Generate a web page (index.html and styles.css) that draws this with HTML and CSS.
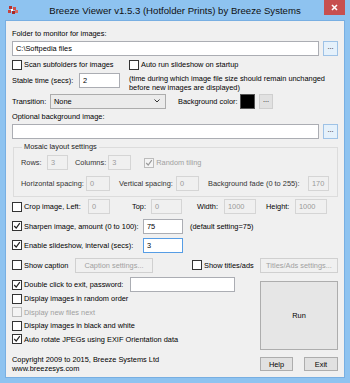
FILE: index.html
```html
<!DOCTYPE html>
<html>
<head>
<meta charset="utf-8">
<title>Breeze Viewer</title>
<link rel="stylesheet" href="styles.css">
</head>
<body>
<div class="window">
  <div class="titlebar">
    <div class="tb-left">
      <svg class="appicon" width="10" height="9" viewBox="0 0 10 9">
        <rect x="1" y="0" width="3" height="3" fill="#b8322f"/>
        <rect x="5" y="1" width="3" height="3" fill="#d0504a"/>
        <rect x="0" y="4" width="3" height="3" fill="#c64540"/>
        <rect x="4" y="5" width="3" height="3" fill="#a82a28"/>
        <rect x="7" y="4" width="3" height="3" fill="#d86a60"/>
        <rect x="3" y="3" width="2" height="2" fill="#fff"/>
      </svg>
    </div>
    <div class="title">Breeze Viewer v1.5.3 (Hotfolder Prints) by Breeze Systems</div>
    <div class="tb-right">
      <div class="close">
        <svg width="7" height="7" viewBox="0 0 7 7"><path d="M1 1L6 6M6 1L1 6" stroke="#fff" stroke-width="1.6"/></svg>
      </div>
    </div>
  </div>

  <div class="client">
    <div class="row text-row r1">Folder to monitor for images:</div>
    <div class="row r2">
      <div class="field w-path">C:\Softpedia files</div>
      <div class="btn dots">...</div>
    </div>
    <div class="row r3">
      <div class="cbl w-scan"><span class="cb"></span>Scan subfolders for images</div>
      <div class="cbl"><span class="cb"></span>Auto run slideshow on startup</div>
    </div>
    <div class="row r4">
      <div class="lbl w-stable">Stable time (secs):</div>
      <div class="field w-stablein">2</div>
      <div class="note">(time during which image file size should remain unchanged<br>before new images are displayed)</div>
    </div>
    <div class="row r5">
      <div class="lbl w-trans">Transition:</div>
      <div class="select">None<svg class="chev" width="6" height="4" viewBox="0 0 6 4"><path d="M0.5 0.5L3 3L5.5 0.5" fill="none" stroke="#333" stroke-width="1"/></svg></div>
      <div class="lbl w-bgcol">Background color:</div>
      <div class="swatch"></div>
      <div class="btn dots small">...</div>
    </div>
    <div class="row text-row r6">Optional background image:</div>
    <div class="row r7">
      <div class="field w-path"></div>
      <div class="btn dots">...</div>
    </div>

    <fieldset class="group">
      <legend>Mosaic layout settings</legend>
      <div class="row ga">
        <div class="lbl glbl w-rows">Rows:</div>
        <div class="field dis w-rowsin">3</div>
        <div class="lbl glbl w-cols">Columns:</div>
        <div class="field dis w-colsin">3</div>
        <div class="cbl dtext w-rand"><span class="cb dis"><svg viewBox="0 0 10 10" width="8" height="8"><path d="M1.5 5L4 7.5L8.5 1.5" fill="none" stroke="#9a9a9a" stroke-width="1.5"/></svg></span>Random tiling</div>
      </div>
      <div class="row gb">
        <div class="lbl glbl w-hsp">Horizontal spacing:</div>
        <div class="field dis w-hspin">0</div>
        <div class="lbl glbl w-vsp">Vertical spacing:</div>
        <div class="field dis w-vspin">0</div>
        <div class="lbl glbl w-fade">Background fade (0 to 255):</div>
        <div class="field dis w-fadein">170</div>
      </div>
    </fieldset>

    <div class="row r9">
      <div class="cbl w-crop"><span class="cb"></span>Crop image, Left:</div>
      <div class="field dis w-left">0</div>
      <div class="lbl w-top">Top:</div>
      <div class="field dis w-topin">0</div>
      <div class="lbl w-width">Width:</div>
      <div class="field dis w-widthin">1000</div>
      <div class="lbl w-height">Height:</div>
      <div class="field dis w-heightin">1000</div>
    </div>
    <div class="row r10">
      <div class="cbl w-sharp"><span class="cb"><svg viewBox="0 0 10 10" width="8" height="8"><path d="M1.5 5L4 7.5L8.5 1.5" fill="none" stroke="#222" stroke-width="1.5"/></svg></span>Sharpen image, amount (0 to 100):</div>
      <div class="field w-amount">75</div>
      <div class="lbl after">(default setting=75)</div>
    </div>
    <div class="row r11">
      <div class="cbl w-sharp"><span class="cb"><svg viewBox="0 0 10 10" width="8" height="8"><path d="M1.5 5L4 7.5L8.5 1.5" fill="none" stroke="#222" stroke-width="1.5"/></svg></span>Enable slideshow, interval (secs):</div>
      <div class="field focus w-amount">3</div>
    </div>
    <div class="row r12">
      <div class="cbl w-cap"><span class="cb"></span>Show caption</div>
      <div class="btn dis w-capbtn">Caption settings...</div>
      <div class="cbl w-titles"><span class="cb"></span>Show titles/ads</div>
      <div class="btn dis w-capbtn">Titles/Ads settings...</div>
    </div>

    <div class="lower">
      <div class="lower-left">
        <div class="row r-dbl">
          <div class="cbl w-dbl"><span class="cb"><svg viewBox="0 0 10 10" width="8" height="8"><path d="M1.5 5L4 7.5L8.5 1.5" fill="none" stroke="#222" stroke-width="1.5"/></svg></span>Double click to exit, password:</div>
          <div class="field w-pass"></div>
        </div>
        <div class="row r-opt"><div class="cbl"><span class="cb"></span>Display images in random order</div></div>
        <div class="row r-opt"><div class="cbl dtext"><span class="cb dis"></span>Display new files next</div></div>
        <div class="row r-opt"><div class="cbl"><span class="cb"></span>Display images in black and white</div></div>
        <div class="row r-opt"><div class="cbl"><span class="cb"><svg viewBox="0 0 10 10" width="8" height="8"><path d="M1.5 5L4 7.5L8.5 1.5" fill="none" stroke="#222" stroke-width="1.5"/></svg></span>Auto rotate JPEGs using EXIF Orientation data</div></div>
        <div class="copyright">Copyright 2009 to 2015, Breeze Systems Ltd<br>www.breezesys.com</div>
      </div>
      <div class="lower-right">
        <div class="btn run">Run</div>
        <div class="btnrow">
          <div class="btn w-help">Help</div>
          <div class="btn w-exit">Exit</div>
        </div>
      </div>
    </div>
  </div>
</div>
</body>
</html>
```

FILE: styles.css
```css
html, body {
  margin: 0;
  padding: 0;
}
body {
  font-family: "Liberation Sans", Arial, sans-serif;
  font-size: 7.4px;
  color: #000;
  background: #8ec3f0;
}
.window {
  width: 350px;
  height: 383px;
  background: #8ec3f0;
  display: flex;
  flex-direction: column;
  overflow: hidden;
}
.titlebar {
  height: 20px;
  display: grid;
  grid-template-columns: 1fr auto 1fr;
  align-items: start;
}
.appicon {
  display: block;
  margin: 6px 0 0 8px;
}
.title {
  font-size: 9.6px;
  line-height: 21px;
  color: #111;
  white-space: nowrap;
}
.tb-right {
  display: flex;
  justify-content: flex-end;
}
.close {
  width: 21px;
  height: 15px;
  margin-right: 5px;
  background: #c75050;
  display: flex;
  align-items: center;
  justify-content: center;
}
.client {
  flex: 1;
  margin: 0 5px 5px;
  border: 1px solid #78afe2;
  background: #f0f0f0;
  padding: 0 6px;
  display: flex;
  flex-direction: column;
}
.row {
  display: flex;
  align-items: center;
  flex-shrink: 0;
}
.text-row {
  height: 10px;
  line-height: 10px;
}
.r1 { margin-top: 8px; }
.r2 { margin-top: 2px; height: 15px; }
.r3 { margin-top: 3px; height: 11px; }
.r4 { margin-top: 3px; height: 16px; align-items: flex-start; }
.r5 { margin-top: 4px; height: 16px; }
.r6 { margin-top: 3px; }
.r7 { margin-top: 2px; height: 15px; }
.r9 { margin-top: 2px; height: 15px; }
.r10 { margin-top: 4px; height: 16px; }
.r11 { margin-top: 3px; height: 16px; }
.r12 { margin-top: 4px; height: 16px; }

.lbl { white-space: nowrap; }
.field {
  height: 15px;
  box-sizing: border-box;
  border: 1px solid #abadb3;
  background: #fff;
  padding: 0 3px;
  display: flex;
  align-items: center;
  white-space: nowrap;
}
.field.dis {
  background: #f0f0f0;
  border-color: #d5d5d5;
  color: #9a9a9a;
}
.field.focus {
  border-color: #569de5;
}
.btn {
  height: 15px;
  box-sizing: border-box;
  border: 1px solid #adadad;
  background: #e1e1e1;
  display: flex;
  align-items: center;
  justify-content: center;
  white-space: nowrap;
}
.btn.dis {
  background: #f0f0f0;
  border-color: #d0d0d0;
  color: #a0a0a0;
}
.dots {
  width: 15px;
  margin-left: 4px;
  line-height: 1;
  padding-bottom: 3px;
  border-color: #9ec2e6;
  background: #e5f1fb;
}
.dots.small {
  width: 14px;
  margin-left: 4px;
  background: #e1e1e1;
  border-color: #cfcfcf;
}
.w-path { width: 307px; }

.cbl {
  display: flex;
  align-items: center;
  white-space: nowrap;
}
.cb {
  width: 10px;
  height: 10px;
  box-sizing: border-box;
  border: 1px solid #333;
  background: #fff;
  margin-right: 2px;
  display: flex;
  align-items: center;
  justify-content: center;
  flex-shrink: 0;
}
.cb.dis {
  border-color: #bcbcbc;
  background: #f4f4f4;
}
.dtext { color: #a0a0a0; }
.w-scan { width: 117px; }

.w-stable { width: 67px; line-height: 16px; }
.w-stablein { width: 41px; }
.note {
  margin-left: 9px;
  line-height: 9px;
  margin-top: 1px;
  white-space: nowrap;
}

.w-trans { width: 38px; }
.select {
  width: 116px;
  height: 15px;
  box-sizing: border-box;
  border: 1px solid #acacac;
  background: #ebebeb;
  padding: 0 3px;
  display: flex;
  align-items: center;
  justify-content: space-between;
}
.chev { margin-right: 2px; }
.w-bgcol { width: 62px; margin-left: 12px; }
.swatch {
  width: 15px;
  height: 15px;
  box-sizing: border-box;
  background: #000;
  border: 1px solid #555;
}

.group {
  margin: 3px 0 0 1px;
  padding: 0 0 5px 7px;
  border: 1px solid #dcdcdc;
  min-width: 0;
  flex-shrink: 0;
}
.group legend {
  padding: 0 2px;
  margin-left: 1px;
  line-height: 10px;
  color: #222;
}
.ga { margin-top: 3px; height: 15px; }
.gb { margin-top: 6px; height: 15px; }
.glbl { color: #333; }
.w-rows { width: 26px; }
.w-rowsin { width: 21px; }
.w-cols { margin-left: 7px; margin-right: 2px; }
.w-colsin { width: 23px; }
.w-rand { margin-left: 13px; }
.w-hsp { width: 65px; }
.w-hspin { width: 24px; }
.w-vsp { width: 57px; margin-left: 9px; }
.w-vspin { width: 23px; }
.w-fade { width: 100px; margin-left: 9px; }
.w-fadein { width: 21px; }

.w-crop { width: 76px; }
.w-left { width: 22px; }
.w-top { width: 19px; margin-left: 22px; }
.w-topin { width: 31px; }
.w-width { width: 27px; margin-left: 15px; }
.w-widthin { width: 32px; }
.w-height { width: 29px; margin-left: 10px; }
.w-heightin { width: 32px; }

.w-sharp { width: 131px; }
.w-amount { width: 40px; }
.after { margin-left: 7px; }

.w-cap { width: 63px; }
.w-capbtn { width: 78px; }
.w-titles { width: 68px; margin-left: 39px; }

.lower {
  margin-top: 4px;
  display: flex;
  justify-content: space-between;
  flex-shrink: 0;
}
.lower-left {
  display: flex;
  flex-direction: column;
}
.r-dbl { height: 15px; }
.w-dbl { width: 118px; }
.w-pass { width: 105px; }
.r-opt { height: 13.5px; }
.copyright {
  margin-top: 8.5px;
  line-height: 9px;
  white-space: nowrap;
}
.lower-right {
  width: 78px;
  display: flex;
  flex-direction: column;
}
.run {
  margin-top: 4px;
  height: 69px;
  background: #e6e6e6;
}
.btnrow {
  margin-top: 7px;
  display: flex;
  justify-content: space-between;
}
.btnrow .btn { height: 14px; }
.w-help { width: 33px; }
.w-exit { width: 34px; }
```
